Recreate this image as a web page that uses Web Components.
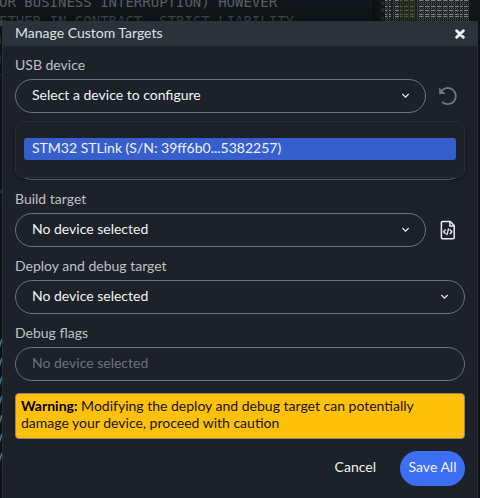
<!DOCTYPE html>
<html lang="en">
<head>
<meta charset="utf-8">
<title>Manage Custom Targets</title>
<style>
html, body { margin: 0; height: 100%; }
body { background: #11161a; overflow: hidden; font: 14px/18px Lato, Carlito, sans-serif; color: #fff; }
</style>
</head>
<body>
<target-app></target-app>
<script>
const define = (name, html, init) => customElements.define(name, class extends HTMLElement {
  constructor() {
    super();
    this.attachShadow({ mode: 'open' }).innerHTML = html;
  }
  connectedCallback() { if (init) init.call(this); }
});

define('code-backdrop', `
<style>
:host { display: block; position: absolute; inset: 0; overflow: hidden; background: #11161a; }
pre { margin: -7px 0 0 -1px; font: 14px/19px "DejaVu Sans Mono", monospace; color: #5a5f62; }
.shade { position: absolute; left: 0; top: 0; width: 373px; height: 21px; background: linear-gradient(transparent 30%, #0d111480); }
.edge { position: absolute; left: 372px; top: 0; width: 8px; height: 21px; background: linear-gradient(90deg, #0b0f12, #11161a); }
svg { position: absolute; left: 0; top: 0; }
</style>
<pre>OR BUSINESS INTERRUPTION) HOWEVER
ETHER IN CONTRACT, STRICT LIABILITY</pre>
<div class="shade"></div><div class="edge"></div>
<svg width="480" height="498"></svg>`, function () {
  let out = '<rect x="381" y="1" width="3" height="4" fill="#24292c"/><rect x="381" y="8" width="3" height="4" fill="#24292c"/><rect x="381" y="17" width="3" height="3" fill="#24292c"/>';
  const groups = [[385, 5], [393, 5], [400, 16], [417, 15], [433, 9], [443, 16], [460, 1], [462, 5], [468, 2]];
  for (let y = 0; y < 21; y += 2) {
    const bright = [0, 6, 10, 14, 16].includes(y);
    for (const [gx, w] of groups)
      for (let x = gx; x < gx + w; x += 2) {
        const green = gx === 400;
        const on = bright && (x % 3);
        const color = green ? (on ? '#525b20' : '#343c20') : (on ? '#7c8082' : '#4b5052');
        out += `<rect x="${x}" y="${y}" width="${on ? 2 : 1}" height="1" fill="${color}"/>`;
      }
    out += `<rect x="385" y="${y + 1}" width="83" height="1" fill="#292e30"/>`;
  }
  for (let i = 0; i < 7; i++) {
    const y = 339 + i * 19;
    out += `<path d="M-1 ${y + 9}L2 ${y}" stroke="#5585a8" stroke-width="1.6"/>`;
  }
  out += '<path d="M0 36h1v8H0zM0 55h1v8H0zM0 74h1v2H0z" fill="#263139"/><path d="M0 190h2v3H0z" fill="#203949"/><path d="M0 205h2v1H0zM0 466h2v1H0z" fill="#252a2e"/>';
  this.shadowRoot.querySelector('svg').innerHTML = out;
});

define('modal-dialog', `
<style>
:host { display: flex; flex-direction: column; position: absolute; left: 2px; top: 21px; width: 476px; height: 477px; box-sizing: border-box; border: solid #2b3035; border-width: 0 1px; background: #1d2128; box-shadow: 0 0 5px #0006; }
header { height: 25px; box-sizing: border-box; padding: 0 12px; display: flex; align-items: center; justify-content: space-between; background: #2b3238; color: #dee2e5; }
.title { padding-bottom: 2px; }
main { padding: 10px 12px 0; display: flex; flex-direction: column; }
svg { display: block; }
</style>
<header><div class="title"><slot name="title"></slot></div><svg width="10" height="10" viewBox="0 0 10 10"><path d="M1.7 1.7l6.6 6.6M8.3 1.7L1.7 8.3" stroke="#f1f3f4" stroke-width="2.9" stroke-linecap="round"/></svg></header>
<main><slot></slot></main>`);

define('form-field', `
<style>
:host { display: block; height: 67px; }
.label { height: 23px; line-height: 18px; color: #bfc2c5; }
.row { display: flex; align-items: center; height: 34px; }
.control { flex: 1; height: 34px; box-sizing: border-box; border: 1px solid #6c7279; border-radius: 17px; padding: 0 15px 2px 16px; display: flex; align-items: center; justify-content: space-between; color: #f3f4f5; }
:host([placeholder]) .control { color: #6c7279; }
:host([plain]) .chev { display: none; }
svg { display: block; }
.chev { margin-top: 2px; }
</style>
<div class="label"><slot name="label"></slot></div>
<div class="row"><div class="control"><slot></slot><svg class="chev" width="8" height="6" viewBox="0 0 8 6"><path d="M.3 1L3.5 4.2 6.7 1" fill="none" stroke="#e8eaec" stroke-width="1.3"/></svg></div><slot name="icon"></slot></div>`);

define('field-icon', `
<style>:host { display: block; width: 24px; height: 24px; margin: 0 5px 0 10px; } svg { display: none; overflow: visible; } :host([kind=reset]) .reset, :host([kind=file]) .file { display: block; }</style>
<svg class="reset" width="24" height="24" viewBox="0 0 24 24"><path d="M5 7.6A8.1 8.1 0 1 1 6.2 18" fill="none" stroke="#727881" stroke-width="1.8"/><path d="M3.2 3.4V10H9.6z" fill="#727881"/></svg>
<svg class="file" width="24" height="24" viewBox=".4 .4 24 24" fill="none" stroke="#edf0f0"><path d="M14.6 3.9H7a1.2 1.2 0 0 0-1.2 1.2v14.8A1.2 1.2 0 0 0 7 21.1h10.4a1.2 1.2 0 0 0 1.2-1.2V8z" stroke-width="1.5"/><path d="M14.3 4v4.3h4.2" stroke-width="1.5"/><path d="M10.1 11.9L8 14.2l2.1 2.3M14.2 11.9l2.1 2.3-2.1 2.3M13 10.8l-1.7 6.7" stroke-width="1.35"/></svg>`);

define('option-menu', `
<style>
:host { display: block; position: absolute; left: 12px; top: 100px; width: 450px; height: 57px; box-sizing: border-box; padding: 16px 8px; border: 1px solid #2b2f36; border-radius: 8px; background: #1d2128; box-shadow: 0 2px 4px #0005; }
.item { height: 22px; box-sizing: border-box; padding: 1px 8px 0; line-height: 18px; border-radius: 3px; background: #375ecd; color: #f1f3fb; }
</style><div class="item"><slot></slot></div>`);

define('warning-box', `
<style>:host { display: block; height: 46px; margin-top: 2px; box-sizing: border-box; border: 1px solid #8a8770; border-radius: 4px; padding: 3px 5px; line-height: 17px; background: #ffc107; color: #16140b; }</style><slot></slot>`);

define('action-button', `
<style>:host { display: flex; box-sizing: border-box; height: 35px; padding: 0 8px 3px; align-items: center; justify-content: center; border-radius: 18px; color: #f2f3f4; } :host([primary]) { background: #3d6ef6; width: 65px; }</style><slot></slot>`);

define('button-row', `
<style>:host { display: flex; justify-content: flex-end; gap: 16px; margin-top: 12px; }</style><slot></slot>`);

define('target-app', `
<style>:host { display: block; position: relative; width: 480px; height: 498px; overflow: hidden; } b { color: #000; } span { white-space: nowrap; }</style>
<code-backdrop></code-backdrop>
<modal-dialog>
<span slot="title">Manage Custom Targets</span>
<form-field><span slot="label">USB device</span><span>Select a device to configure</span><field-icon slot="icon" kind="reset"></field-icon></form-field>
<form-field plain></form-field>
<form-field><span slot="label">Build target</span><span>No device selected</span><field-icon slot="icon" kind="file"></field-icon></form-field>
<form-field><span slot="label">Deploy and debug target</span><span>No device selected</span></form-field>
<form-field plain placeholder><span slot="label">Debug flags</span><span>No device selected</span></form-field>
<warning-box><b>Warning:</b> Modifying the deploy and debug target can potentially<br>damage your device, proceed with caution</warning-box>
<button-row><action-button>Cancel</action-button><action-button primary><span>Save All</span></action-button></button-row>
<option-menu>STM32 STLink (S/N: 39ff6b0...5382257)</option-menu>
</modal-dialog>`);
</script>
</body>
</html>
